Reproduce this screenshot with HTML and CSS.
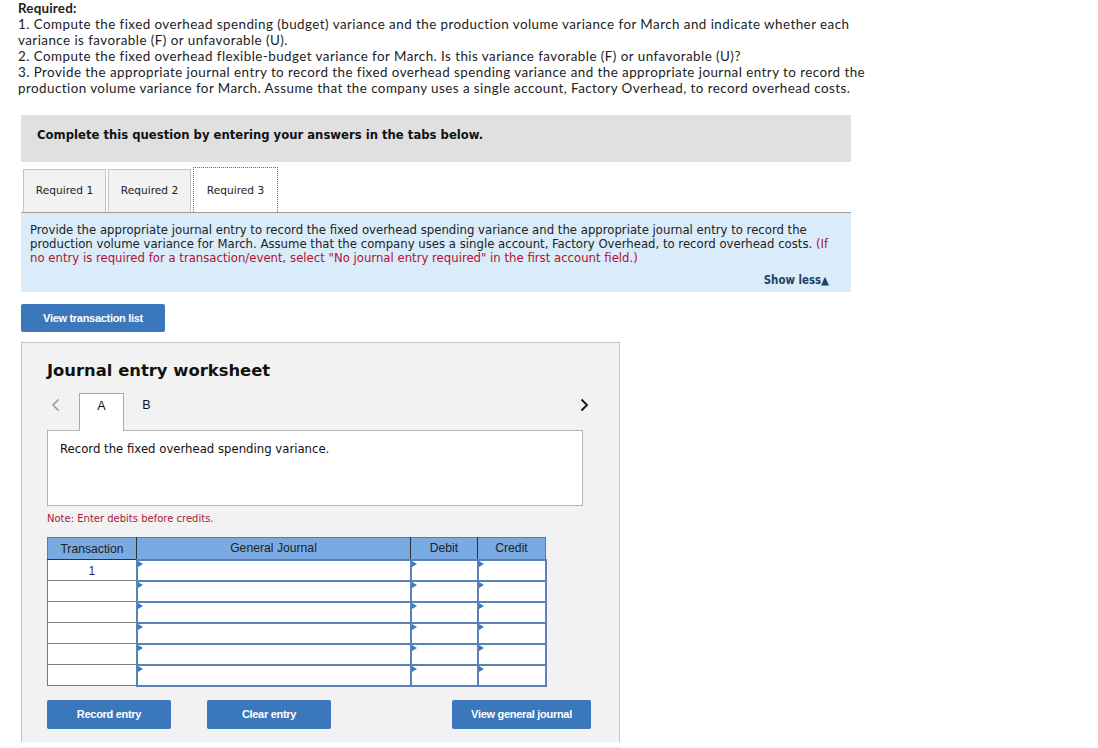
FILE: index.html
```html
<!DOCTYPE html>
<html>
<head>
<meta charset="utf-8">
<link rel="stylesheet" href="styles.css">
</head>
<body>
<div class="req">
  <div class="req-title">Required:</div>
  <div>1. Compute the fixed overhead spending (budget) variance and the production volume variance for March and indicate whether each variance is favorable (F) or unfavorable (U).</div>
  <div>2. Compute the fixed overhead flexible-budget variance for March. Is this variance favorable (F) or unfavorable (U)?</div>
  <div>3. Provide the appropriate journal entry to record the fixed overhead spending variance and the appropriate journal entry to record the production volume variance for March. Assume that the company uses a single account, Factory Overhead, to record overhead costs.</div>
</div>

<div class="wrap">
  <div class="banner">Complete this question by entering your answers in the tabs below.</div>

  <div class="tabs">
    <div class="tab">Required 1</div>
    <div class="tab">Required 2</div>
    <div class="tab active">Required 3</div>
  </div>

  <div class="info">
    <p>Provide the appropriate journal entry to record the fixed overhead spending variance and the appropriate journal entry to record the production volume variance for March. Assume that the company uses a single account, Factory Overhead, to record overhead costs. <span class="red">(If no entry is required for a transaction/event, select "No journal entry required" in the first account field.)</span></p>
    <div class="showless">Show less&#9650;</div>
  </div>

  <button class="btn btn-list">View transaction list</button>

  <div class="panel">
    <h2 class="ws-title">Journal entry worksheet</h2>
    <div class="nav">
      <span class="arrow prev">
        <svg width="9" height="14" viewBox="0 0 9 14"><path d="M7.5 1.5 L2 7 L7.5 12.5" fill="none" stroke="#9a9a9a" stroke-width="1.6"/></svg>
      </span>
      <div class="etab active">A</div>
      <div class="etab">B</div>
      <span class="spacer"></span>
      <span class="arrow next">
        <svg width="9" height="14" viewBox="0 0 9 14"><path d="M1.5 1.5 L7 7 L1.5 12.5" fill="none" stroke="#111" stroke-width="1.8"/></svg>
      </span>
    </div>
    <div class="desc">Record the fixed overhead spending variance.</div>
    <div class="note">Note: Enter debits before credits.</div>

    <table class="jt">
      <thead>
        <tr><th class="c-tr">Transaction</th><th class="c-gj">General Journal</th><th class="c-d">Debit</th><th class="c-c">Credit</th></tr>
      </thead>
      <tbody>
        <tr><td class="tr">1</td><td class="in"></td><td class="in"></td><td class="in"></td></tr>
        <tr><td class="tr"></td><td class="in"></td><td class="in"></td><td class="in"></td></tr>
        <tr><td class="tr"></td><td class="in"></td><td class="in"></td><td class="in"></td></tr>
        <tr><td class="tr"></td><td class="in"></td><td class="in"></td><td class="in"></td></tr>
        <tr><td class="tr"></td><td class="in"></td><td class="in"></td><td class="in"></td></tr>
        <tr><td class="tr"></td><td class="in"></td><td class="in"></td><td class="in"></td></tr>
      </tbody>
    </table>

    <div class="actions">
      <button class="btn btn-act">Record entry</button>
      <button class="btn btn-act btn-clear">Clear entry</button>
      <span class="spacer"></span>
      <button class="btn btn-act btn-view">View general journal</button>
    </div>
  </div>
  <div class="baseline"></div>
</div>
</body>
</html>
```

FILE: styles.css
```css
* { box-sizing: border-box; }
html, body { margin: 0; padding: 0; background: #fff; }
body { font-family: "Lato", "Open Sans", sans-serif; color: #1a1a1a; }

.req {
  padding: 0 0 0 18px;
  width: 870px;
  font-size: 13.4px;
  letter-spacing: 0.45px;
  line-height: 16px;
  color: #222;
}
.req-title { font-weight: 700; letter-spacing: 0.2px; }

.wrap {
  margin: 19px 0 0 21px;
  width: 830px;
}

.banner {
  background: #e0e0e0;
  height: 47px;
  padding: 13px 16px 0;
  font-family: "DejaVu Sans", Verdana, sans-serif;
  font-weight: 700;
  font-size: 11.65px;
  color: #111;
}

.tabs {
  display: flex;
  gap: 2px;
  padding: 7px 0 0 2px;
  border-bottom: 1px solid #9e9e9e;
}
.tab {
  width: 83px;
  height: 43px;
  background: #f2f2f2;
  border: 1px solid #c4c4c4;
  border-bottom: none;
  font-family: "DejaVu Sans", Verdana, sans-serif;
  font-size: 10.6px;
  color: #222;
  display: flex;
  align-items: center;
  justify-content: center;
  padding-bottom: 2px;
}
.tab.active {
  width: 85px;
  background: #fff;
  border: 1px dotted #3b72b8;
  border-bottom: none;
  margin-bottom: -1px;
  height: 45px;
  margin-top: -2px;
  padding-bottom: 0;
}

.info {
  background: #daecfa;
  padding: 10px 9px 5px 9px;
  font-family: "DejaVu Sans Condensed", "DejaVu Sans", sans-serif;
  font-size: 13px;
  line-height: 14px;
  color: #222;
  height: 79px;
}
.info p { margin: 0; }
.red { color: #b3112e; }
.showless {
  text-align: right;
  margin-top: 8px;
  padding-right: 13px;
  font-family: "DejaVu Sans Condensed", "DejaVu Sans", sans-serif;
  font-weight: 700;
  font-size: 11.4px;
  color: #23406a;
}

.btn {
  border: none;
  border-radius: 2px;
  background: #3a77bb;
  color: #fff;
  font-family: "Liberation Sans", Arial, sans-serif;
  font-weight: 700;
  font-size: 11px;
  letter-spacing: -0.3px;
  padding: 0;
  cursor: pointer;
}
.btn-list {
  display: block;
  width: 144px;
  height: 28px;
  margin-top: 12px;
}

.panel {
  margin-top: 10px;
  width: 599px;
  background: #f2f2f2;
  border: 1px solid #c6c6c6;
  border-bottom: none;
  padding: 17px 25px 13px 25px;
}
.ws-title {
  margin: 0;
  font-family: "DejaVu Sans", Verdana, sans-serif;
  font-weight: 700;
  font-size: 16.4px;
  line-height: 22px;
  color: #111;
}

.nav {
  display: flex;
  align-items: flex-end;
  margin-top: 11px;
  height: 37px;
}
.arrow { display: flex; align-items: flex-start; height: 37px; padding-top: 5px; }
.prev { padding-left: 4px; width: 32px; }
.next { padding-right: 5px; }
.spacer { flex: 1; }
.etab {
  width: 45px;
  height: 37px;
  display: flex;
  align-items: flex-start;
  justify-content: center;
  padding-top: 5px;
  font-family: "Liberation Sans", Arial, sans-serif;
  font-size: 12.5px;
  color: #111;
}
.etab.active {
  background: #fff;
  border: 1px solid #a9a9a9;
  border-bottom: none;
  height: 38px;
  margin-bottom: -1px;
  position: relative;
  z-index: 1;
}

.desc {
  width: 536px;
  height: 76px;
  background: #fff;
  border: 1px solid #b4b4b4;
  padding: 11px 12px;
  font-family: "DejaVu Sans", Verdana, sans-serif;
  font-size: 11.7px;
  color: #111;
}

.note {
  margin-top: 7px;
  font-family: "DejaVu Sans", Verdana, sans-serif;
  font-size: 10px;
  color: #a8193b;
}

.jt {
  margin-top: 13px;
  border-collapse: collapse;
  font-family: "Liberation Sans", Arial, sans-serif;
}
.jt th {
  background: #79abe2;
  height: 22px;
  font-weight: 400;
  font-size: 12.2px;
  color: #222;
  border: 1px solid #333;
  border-top-color: #777;
  padding: 0;
  text-align: center;
}
.jt th.c-tr { border-left-color: #777; }
.jt th.c-c { border-right-color: #777; }
.c-tr { width: 89px; }
.c-gj { width: 274px; }
.c-d { width: 67px; }
.c-c { width: 68px; }
.jt td {
  height: 21px;
  background: #fff;
  padding: 0;
}
.jt td.tr {
  border: 1px solid #7a7a7a;
  text-align: center;
  font-size: 12px;
  color: #3a1e6e;
  vertical-align: top;
  padding-top: 4px;
}
.jt td.in {
  border: 2px solid #5a82b4;
  position: relative;
}
.jt td.in::before {
  content: "";
  position: absolute;
  left: 0;
  top: 0;
  border-left: 5px solid #3e78c4;
  border-top: 3px solid transparent;
  border-bottom: 3px solid transparent;
}

.actions {
  display: flex;
  margin-top: 13px;
  width: 544px;
}
.btn-act {
  width: 124px;
  height: 29px;
}
.btn-clear { margin-left: 36px; }
.btn-view { width: 139px; }

.baseline {
  margin-top: 5px;
  height: 2px;
  background: #f0f0f0;
  width: 599px;
}
```
